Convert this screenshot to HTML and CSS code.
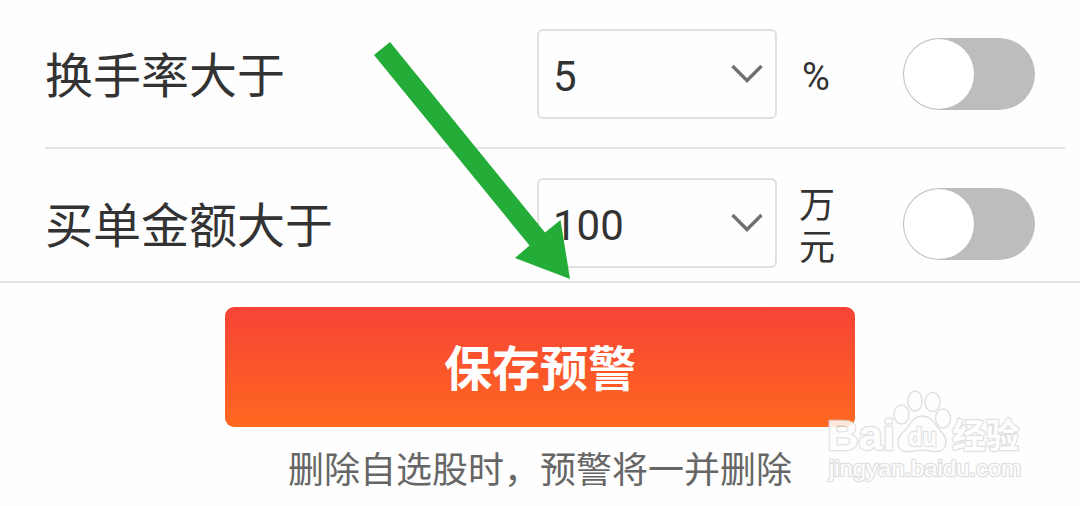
FILE: index.html
```
<!DOCTYPE html>
<html lang="zh-CN">
<head>
  <meta charset="UTF-8">
  <meta name="viewport" content="width=device-width, initial-scale=1.0">
  <title>股票预警</title>
  <link rel="stylesheet" href="styles.css">
</head>
<body>
  <div class="list">
    <div class="row">
      <span class="label">换手率大于</span>
      <div class="select">
        <span>5</span>
        <svg class="chevron" width="32" height="20" viewBox="0 0 32 20"><path d="M1.5 2 L16 16.5 L30.5 2"/></svg>
      </div>
      <span class="unit percent">%</span>
      <div class="switch"><div class="knob"></div></div>
    </div>
    <div class="row last">
      <span class="label">买单金额大于</span>
      <div class="select">
        <span>100</span>
        <svg class="chevron" width="32" height="20" viewBox="0 0 32 20"><path d="M1.5 2 L16 16.5 L30.5 2"/></svg>
      </div>
      <span class="unit">万元</span>
      <div class="switch"><div class="knob"></div></div>
    </div>
  </div>

  <div class="footer">
    <button class="save">保存预警</button>
    <p class="note">删除自选股时，预警将一并删除</p>
  </div>

  <svg class="arrow" width="200" height="242" viewBox="0 0 200 242">
    <path d="M0 14 L16 1 L171 191.500 L186.500 179 L196 238 L141 217 L155.500 204.500 Z"/>
  </svg>

  <!-- 水印 -->
  <svg class="watermark" width="210" height="110" viewBox="820 385 210 110">
    <g class="mark">
      <ellipse cx="901.500" cy="414.500" rx="7.500" ry="9.500"/>
      <ellipse cx="915" cy="401" rx="7" ry="10"/>
      <ellipse cx="932.500" cy="402" rx="7.500" ry="9.500"/>
      <ellipse cx="943" cy="418.500" rx="7.500" ry="9.500"/>
      <path d="M922 416 C914 416 911 423 906 429 C901 434 897 438 898 444 C899 451 905 453 913 451 C920 450 925 450 931 451 C940 453 945 450 946 443 C947 437 942 433 938 428 C933 421 930 416 922 416 Z"/>
      <text class="bai" x="827" y="450" textLength="68" lengthAdjust="spacingAndGlyphs">Bai</text>
      <text class="du" x="908" y="445.500" textLength="29" lengthAdjust="spacingAndGlyphs">du</text>
      <text class="jy" x="952" y="448" textLength="67" lengthAdjust="spacingAndGlyphs">经验</text>
      <text class="url" x="829" y="475.500" textLength="192" lengthAdjust="spacingAndGlyphs">jingyan.baidu.com</text>
    </g>
  </svg>
</body>
</html>
```
FILE: styles.css
```
* {
  box-sizing: border-box;
}
body {
  margin: 0;
  height: 506px;
  position: relative;
  overflow: hidden;
  background: #fefefe;
  color: #333;
  font-family: Roboto, "Noto Sans CJK SC", sans-serif;
}
.list {
  height: 281px;
  overflow: hidden;
}
.row {
  display: flex;
  align-items: center;
  height: 149px;
  margin: 0 15px 0 45px;
  padding: 1px 30px 0 0;
  border-bottom: 2px solid #e5e5e5;
}
.row.last {
  height: 150px;
  padding-top: 0;
  border-bottom: none;
}
.label {
  width: 492px;
  padding-top: 5px;
  font-size: 48px;
  line-height: 70px;
}
.select {
  display: flex;
  align-items: center;
  justify-content: space-between;
  width: 240px;
  height: 90px;
  padding: 4px 12px 0 14px;
  border: 2px solid #e0e0e0;
  border-radius: 6px;
  background: #fefefe;
  font-size: 42px;
}
.last .select {
  margin-top: -2px;
}
.chevron {
  margin-top: -4px;
}
.chevron path {
  fill: none;
  stroke: #707070;
  stroke-width: 3.4;
}
.unit {
  width: 36px;
  margin-left: 22px;
  padding-top: 6px;
  font-size: 36px;
  line-height: 42px;
}
.unit.percent {
  padding-left: 3px;
  font-size: 38px;
}
.switch {
  width: 132px;
  height: 72px;
  margin-left: auto;
  padding: 1px;
  border-radius: 36px;
  background: #bdbdbd;
}
.knob {
  width: 70px;
  height: 70px;
  border-radius: 50%;
  background: #fff;
}
.footer {
  display: flex;
  flex-direction: column;
  align-items: center;
  height: 225px;
  padding-top: 24px;
  border-top: 2px solid #e5e5e5;
}
.save {
  width: 630px;
  height: 120px;
  padding: 0 0 4px;
  border: none;
  border-radius: 9px;
  background: linear-gradient(#f64336, #ff6820);
  color: #fff;
  font-family: "Noto Sans CJK SC", sans-serif;
  font-size: 48px;
  font-weight: bold;
}
.note {
  margin: 14px 0 0;
  color: #666;
  font-family: "Noto Sans CJK SC", sans-serif;
  font-size: 36px;
  line-height: 52px;
}
.arrow {
  position: absolute;
  left: 374px;
  top: 41px;
}
.arrow path {
  fill: #23ac38;
}
.watermark {
  position: absolute;
  left: 820px;
  top: 385px;
  opacity: 0.85;
}
.mark {
  fill: #fff;
  stroke: #dcdcdc;
  stroke-width: 1.5;
}
.mark text {
  font-family: "Noto Sans", "Noto Sans CJK SC", sans-serif;
  paint-order: stroke;
  stroke-width: 2.5;
  stroke-linejoin: round;
}
.mark .bai {
  font-family: "Liberation Sans", sans-serif;
  font-size: 43px;
  font-weight: bold;
}
.mark .du {
  font-size: 25px;
  font-weight: bold;
}
.mark .jy {
  font-size: 34px;
  font-weight: bold;
}
.mark .url {
  font-family: "Liberation Sans", sans-serif;
  font-size: 22px;
}
```
